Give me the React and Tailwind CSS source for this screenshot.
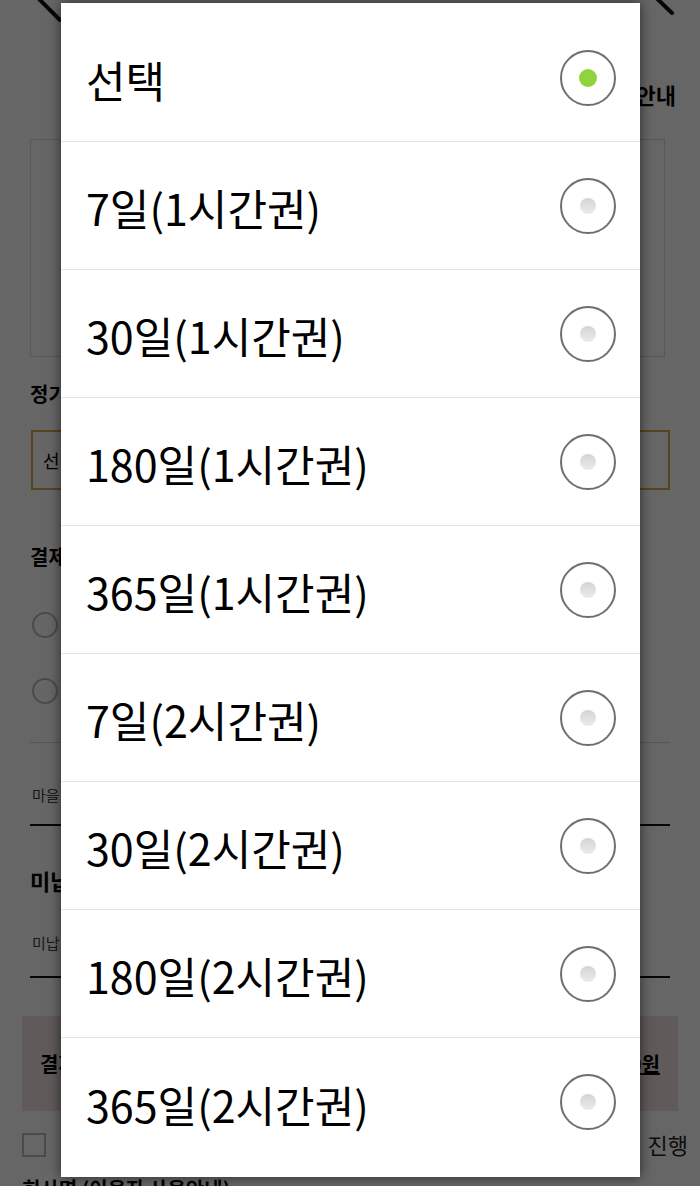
import React, { useState } from 'react';

const options = [
  '선택',
  '7일(1시간권)',
  '30일(1시간권)',
  '180일(1시간권)',
  '365일(1시간권)',
  '7일(2시간권)',
  '30일(2시간권)',
  '180일(2시간권)',
  '365일(2시간권)',
];

function Radio({ checked }) {
  return (
    <div className="w-[56px] h-[56px] rounded-full border-[2.5px] border-[#6f6f6f] flex items-center justify-center bg-white">
      {checked ? (
        <div className="w-[18px] h-[18px] rounded-full bg-[#8fd43c]" />
      ) : (
        <div className="w-[16px] h-[16px] rounded-full bg-gradient-to-b from-[#d4d4d4] to-[#ececec]" />
      )}
    </div>
  );
}

function Page() {
  // 뒤에 깔린 결제 화면
  return (
    <div className="w-[700px] h-[1186px] bg-white text-black overflow-hidden">
      <div className="flex justify-between h-[30px]">
        <svg width="80" height="30" className="ml-[10px]">
          <line x1="22" y1="-8" x2="50" y2="20" stroke="#111" strokeWidth="4" strokeLinecap="round" />
        </svg>
        <svg width="60" height="30">
          <line x1="8" y1="-10" x2="32" y2="13" stroke="#111" strokeWidth="4" strokeLinecap="round" />
        </svg>
      </div>
      <div className="flex justify-end pr-[24px] mt-[48px] h-[32px] text-[22px] font-bold leading-[32px]">이용안내</div>
      <div className="ml-[30px] mr-[35px] mt-[29px] h-[218px] border border-[#dcdcdc]" />
      <div className="px-[30px] mt-[22px] text-[20px] font-bold leading-[30px]">정기권</div>
      <div className="ml-[31px] mr-[30px] mt-[21px] h-[60px] border-[2px] border-[#d9a94a] flex items-center pl-[10px] text-[18px]">선택</div>
      <div className="px-[30px] mt-[52px] text-[20px] font-bold leading-[30px]">결제</div>
      <div className="px-[32px] mt-[40px] flex flex-col gap-[40px]">
        <div className="w-[26px] h-[26px] rounded-full border-[2px] border-[#bbb]" />
        <div className="w-[26px] h-[26px] rounded-full border-[2px] border-[#bbb]" />
      </div>
      <div className="mx-[30px] mt-[38px] h-px bg-[#d8d8d8]" />
      <div className="px-[32px] mt-[42px] text-[15px] text-[#444] leading-[20px]">마을</div>
      <div className="mx-[30px] mt-[19px] h-[2px] bg-[#111]" />
      <div className="px-[30px] mt-[39px] text-[22px] font-bold leading-[30px]">미납</div>
      <div className="px-[32px] mt-[38px] text-[15px] text-[#444] leading-[20px]">미납</div>
      <div className="mx-[30px] mt-[23px] h-[2px] bg-[#111]" />
      <div className="mx-[22px] mt-[38px] h-[95px] bg-[#efe0e0] flex items-center justify-between px-[18px]">
        <span className="text-[20px] font-bold">결제</span>
        <span className="text-[20px] font-bold underline">0원</span>
      </div>
      <div className="mx-[22px] mt-[17px] flex items-center justify-between">
        <div className="w-[24px] h-[24px] border-[2px] border-[#bbb]" />
        <span className="text-[22px] text-[#222] mr-[-10px]">진행</span>
      </div>
      <div className="px-[22px] mt-[14px] text-[20px] font-bold leading-[28px]">회사명 (이용자 사용안내)</div>
    </div>
  );
}

export default function App() {
  const [selected, setSelected] = useState(0);

  return (
    <div className="relative w-[700px] h-[1186px] overflow-hidden font-['Noto_Sans_CJK_KR','Noto_Sans',sans-serif]">
      <Page />
      <div className="absolute inset-0 bg-black/60" />
      <div className="absolute left-[61px] top-[3px] w-[579px] h-[1174px] bg-white py-[11px] shadow-[0_0_12px_rgba(0,0,0,0.6)]">
        {options.map((opt, i) => (
          <div
            key={opt}
            onClick={() => setSelected(i)}
            className={`h-[128px] flex items-center justify-between pl-[25px] pr-[24px] ${
              i < options.length - 1 ? 'border-b border-[#e3e3e3]' : ''
            }`}
          >
            <span className="text-[43px] leading-none pt-[4px] text-black">{opt}</span>
            <Radio checked={selected === i} />
          </div>
        ))}
      </div>
    </div>
  );
}
